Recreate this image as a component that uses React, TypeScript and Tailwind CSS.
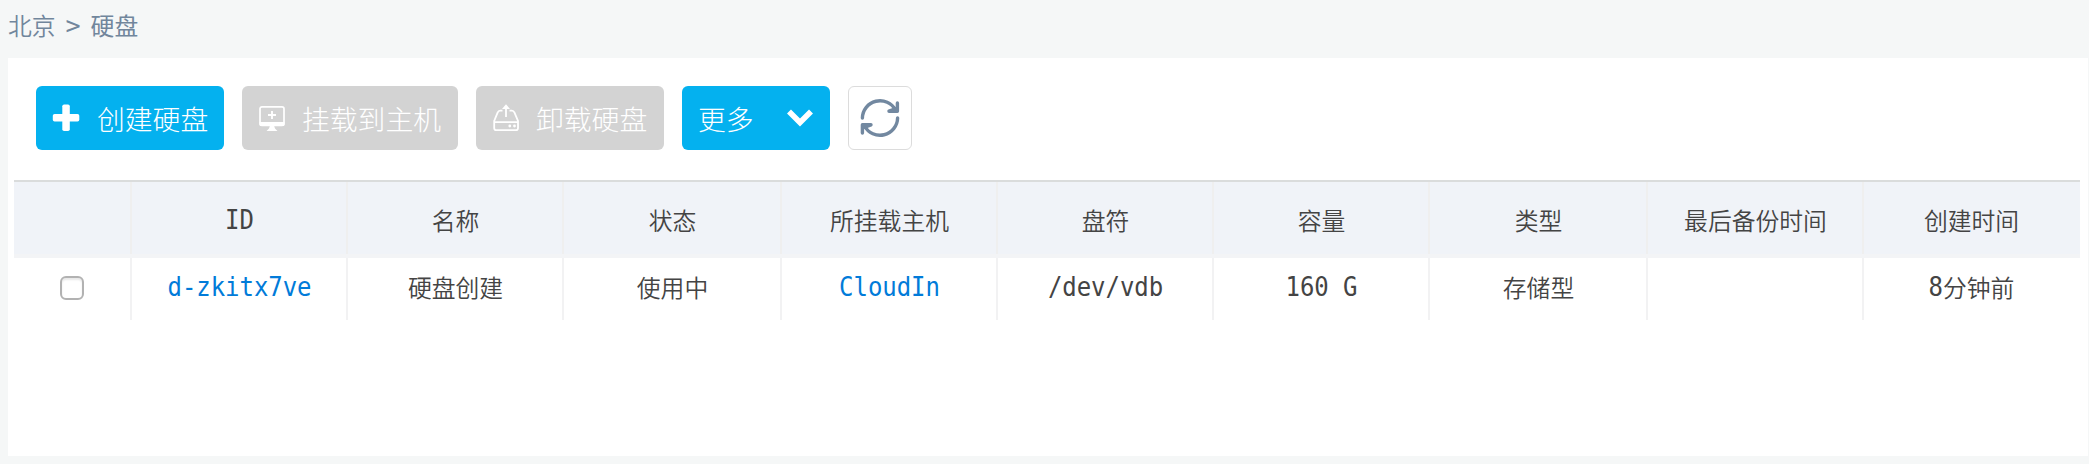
import type { ReactNode } from "react";

const columns = ["ID", "名称", "状态", "所挂载主机", "盘符", "容量", "类型", "最后备份时间", "创建时间"];
const row = ["d-zkitx7ve", "硬盘创建", "使用中", "CloudIn", "/dev/vdb", "160 G", "存储型", "", "8分钟前"];
const grid =
  "grid grid-cols-[118px_216px_216px_218px_216px_216px_216px_218px_216px_216px]";

// Latin runs are set in a condensed monospace, Chinese in a light sans.
function Label({ text }: { text: string }) {
  const parts = text.match(/[\x20-\x7e]+|[^\x20-\x7e]+/g) ?? [];
  return (
    <span className="flex items-center whitespace-pre pl-px">
      {parts.map((part, i) =>
        /^[\x20-\x7e]/.test(part) ? (
          <span
            key={i}
            className="font-['DejaVu_Sans_Mono',monospace] text-[24px] tracking-[-0.05px] scale-y-[1.08]"
          >
            {part}
          </span>
        ) : (
          <span key={i}>{part}</span>
        ),
      )}
    </span>
  );
}

function Button({ disabled, className, children }: { disabled?: boolean; className: string; children: ReactNode }) {
  return (
    <button
      disabled={disabled}
      className={`flex h-16 items-center rounded-md text-[27.8px] font-light text-white ${disabled ? "bg-[#d3d3d3]" : "bg-[#04b1ef]"} ${className}`}
    >
      {children}
    </button>
  );
}

function PlusIcon() {
  return (
    <svg className="size-[28px] shrink-0" viewBox="0 0 28 28" fill="#fff">
      <rect x="0.800" y="10" width="26.500" height="7.500" rx="1.800" />
      <rect x="10.300" y="0.500" width="7.500" height="26.500" rx="1.800" />
    </svg>
  );
}

function MonitorIcon() {
  return (
    <svg className="size-[28px] shrink-0" viewBox="0 0 28 28" fill="none" stroke="#fff">
      <rect x="2" y="2.800" width="24" height="18.500" rx="2" strokeWidth="1.700" />
      <path d="M1.500 18H26.500V20.500Q26.500 22 25 22H3Q1.500 22 1.500 20.500Z" fill="#fff" stroke="none" />
      <path d="M14 7V15M10 11H18" strokeWidth="1.900" />
      <path d="M12 21.500H16L17 24.500L19.500 27H8.500L11 24.500Z" fill="#fff" stroke="none" />
    </svg>
  );
}

function EjectDiskIcon() {
  return (
    <svg className="size-[28px] shrink-0" viewBox="0 0 28 28" fill="none" stroke="#fff" strokeWidth="1.800">
      <path d="M10.500 6.600H8.200Q6.400 6.600 5.600 8.600L2.200 17V24Q2.200 26.200 4.200 26.200H24Q26 26.200 26 24V17L22.500 8.600Q21.600 6.600 19.800 6.600H17.500" />
      <path d="M2.200 18.200H26M14 13V3" />
      <path d="M10 5L14 0.300L18 5Z" fill="#fff" stroke="none" />
      <circle cx="17.800" cy="22" r="1.400" fill="#fff" stroke="none" />
      <circle cx="22.500" cy="22" r="1.400" fill="#fff" stroke="none" />
    </svg>
  );
}

function ChevronIcon() {
  return (
    <svg className="h-[18px] w-[28px] shrink-0" viewBox="0 0 28 18" fill="none" stroke="#fff" strokeWidth="5.600">
      <path d="M3 2.500L14 13.500L25 2.500" strokeLinejoin="miter" />
    </svg>
  );
}

function RefreshIcon() {
  return (
    <svg className="size-10 shrink-0" viewBox="0 0 40 40" fill="none" stroke="#7288a0" strokeWidth="3.400" strokeLinecap="round" strokeLinejoin="round">
      <path d="M2.400 20A17.600 17.600 0 0 1 35.500 12" />
      <path d="M37.600 20A17.600 17.600 0 0 1 4.500 28" />
      <path d="M37.400 5V13.200H29L36 10.500" />
      <path d="M2.400 35V26.800H11L4 29.500" />
    </svg>
  );
}

export default function App() {
  return (
    <div className="flex h-[464px] w-[2089px] flex-col bg-[#f5f7f7] pb-2 pl-2 pr-px font-['Noto_Sans_CJK_SC',sans-serif] text-[23.8px] font-[350] leading-none text-[#444]">
      <nav className="flex h-[58px] items-center pb-[8px] text-[#71869c]">
        <span>北京</span>
        <span className="w-[35px] text-center font-['DejaVu_Sans_Mono',monospace] text-[25px]">&gt;</span>
        <span className="font-normal">硬盘</span>
      </nav>
      <main className="flex-1 bg-white pl-1.5 pr-2">
        <div className="flex h-[122px] items-start gap-[18px] pl-[22px] pt-7">
          <Button className="w-[188px] gap-[17px] pl-4">
            <PlusIcon />
            <span className="pt-0.5">创建硬盘</span>
          </Button>
          <Button disabled className="w-[216px] gap-[16px] pl-4">
            <MonitorIcon />
            <span className="pt-0.5">挂载到主机</span>
          </Button>
          <Button disabled className="w-[188px] gap-[16px] pl-4">
            <EjectDiskIcon />
            <span className="pt-0.5">卸载硬盘</span>
          </Button>
          <Button className="w-[148px] justify-between px-4">
            <span className="pt-0.5">更多</span>
            <ChevronIcon />
          </Button>
          <button aria-label="刷新" className="flex size-16 items-center justify-center rounded-md border border-[#dcdcdc]">
            <RefreshIcon />
          </button>
        </div>
        <div>
          <div className={`${grid} h-[78px] border-b-4 border-t-2 border-b-[#f3f4f6] border-t-[#dadcdc] bg-[#f0f3f8]`}>
            <div className="border-r-2 border-[#efefef]" />
            {columns.map((c) => (
              <div key={c} className="flex items-center justify-center border-r-2 border-[#efefef] pt-[3px] last:border-r-transparent">
                <Label text={c} />
              </div>
            ))}
          </div>
          <div className={`${grid} h-[62px]`}>
            <div className="flex items-center justify-center border-r-2 border-[#f2f2f3] pb-0.5">
              <input
                type="checkbox"
                className="size-6 appearance-none rounded-md border-2 border-[#b2b2b2] bg-white shadow-[inset_0_2px_2px_#e8e8e8]"
              />
            </div>
            {row.map((c, i) => (
              <div
                key={i}
                className={`flex items-center justify-center border-r-2 border-[#f2f2f3] pb-1 last:border-r-transparent ${i === 0 || i === 3 ? "text-[#017bd9]" : ""}`}
              >
                <Label text={c} />
              </div>
            ))}
          </div>
        </div>
      </main>
    </div>
  );
}
